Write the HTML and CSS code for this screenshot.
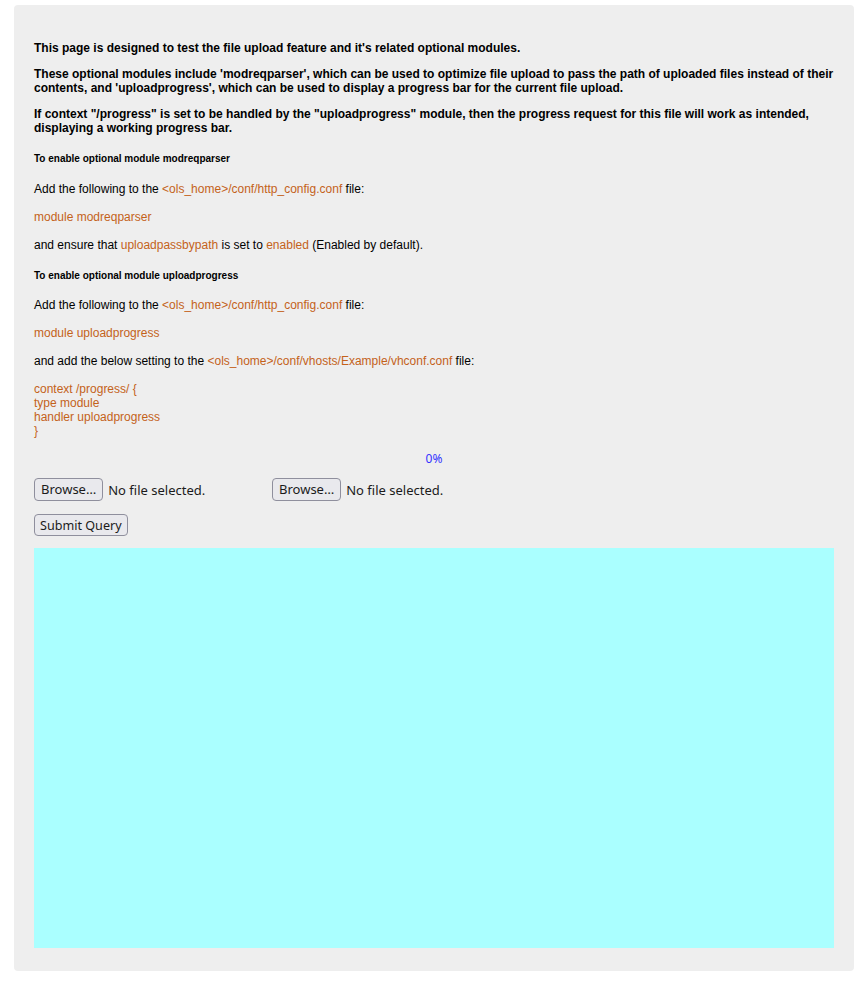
FILE: index.html
```html
<!DOCTYPE html>
<html>
<head>
<meta charset="utf-8">
<title>File upload test</title>
<link rel="stylesheet" href="styles.css">
</head>
<body>
<div class="box">
  <p class="lead">This page is designed to test the file upload feature and it's related optional modules.</p>
  <p class="lead">These optional modules include 'modreqparser', which can be used to optimize file upload to pass the path of uploaded files instead of their contents, and 'uploadprogress', which can be used to display a progress bar for the current file upload.</p>
  <p class="lead">If context "/progress" is set to be handled by the "uploadprogress" module, then the progress request for this file will work as intended, displaying a working progress bar.</p>

  <h5 class="sub">To enable optional module modreqparser</h5>
  <div class="text">
    Add the following to the <span class="hl">&lt;ols_home&gt;/conf/http_config.conf</span> file:<br><br>
    <span class="hl">module modreqparser</span><br><br>
    and ensure that <span class="hl">uploadpassbypath</span> is set to <span class="hl">enabled</span> (Enabled by default).
  </div>

  <h5 class="sub">To enable optional module uploadprogress</h5>
  <div class="text">
    Add the following to the <span class="hl">&lt;ols_home&gt;/conf/http_config.conf</span> file:<br><br>
    <span class="hl">module uploadprogress</span><br><br>
    and add the below setting to the <span class="hl">&lt;ols_home&gt;/conf/vhosts/Example/vhconf.conf</span> file:<br><br>
    <span class="hl">context /progress/ {<br>type module<br>handler uploadprogress<br>}</span>
  </div>

  <div class="progress">0%</div>

  <form class="upload">
    <div class="files">
      <div class="file"><button type="button" class="btn">Browse…</button><span class="fname">No file selected.</span></div>
      <div class="file"><button type="button" class="btn">Browse…</button><span class="fname">No file selected.</span></div>
    </div>
    <div class="submit-row"><button type="button" class="btn">Submit Query</button></div>
  </form>

  <div class="frame"></div>
</div>
</body>
</html>
```

FILE: styles.css
```css
html, body {
  margin: 0;
  padding: 0;
  background: #ffffff;
}

body {
  font-family: "Liberation Sans", Arial, sans-serif;
  font-size: 12px;
  color: #000;
}

.box {
  box-sizing: border-box;
  width: 840px;
  margin: 5px 0 0 14px;
  padding: 24px 20px 23px 20px;
  background: #eeeeee;
  border-radius: 4px;
}

.lead {
  font-weight: bold;
  margin: 12px 0;
}

.sub {
  font-size: 10px;
  font-weight: bold;
  margin: 18px 0 17.5px 0;
}

.text {
  line-height: 14px;
}

.hl {
  color: #c4621a;
}

.progress {
  margin-top: 14px;
  text-align: center;
  color: #3333ff;
  font-family: "Noto Sans", sans-serif;
  font-size: 12px;
  line-height: 14px;
}

.upload {
  margin: 0;
}

.files {
  display: flex;
  gap: 4px;
  margin-top: 12px;
}

.file {
  display: flex;
  align-items: center;
  gap: 5px;
  width: 234px;
}

.btn {
  font-family: "Noto Sans", sans-serif;
  font-size: 13px;
  color: #1b1b1b;
  background: #e9e9ed;
  border: 1px solid #8f8f9d;
  border-radius: 4px;
  padding: 1px 6px;
  height: 23px;
  line-height: 19px;
}

.fname {
  font-family: "Noto Sans", sans-serif;
  font-size: 13px;
  color: #1b1b1b;
}

.submit-row {
  margin-top: 13px;
}

.submit-row .btn {
  height: 22px;
  padding: 1px 5px;
  font-size: 12.6px;
}

.frame {
  margin-top: 12px;
  height: 400px;
  background: #aaffff;
}
```
